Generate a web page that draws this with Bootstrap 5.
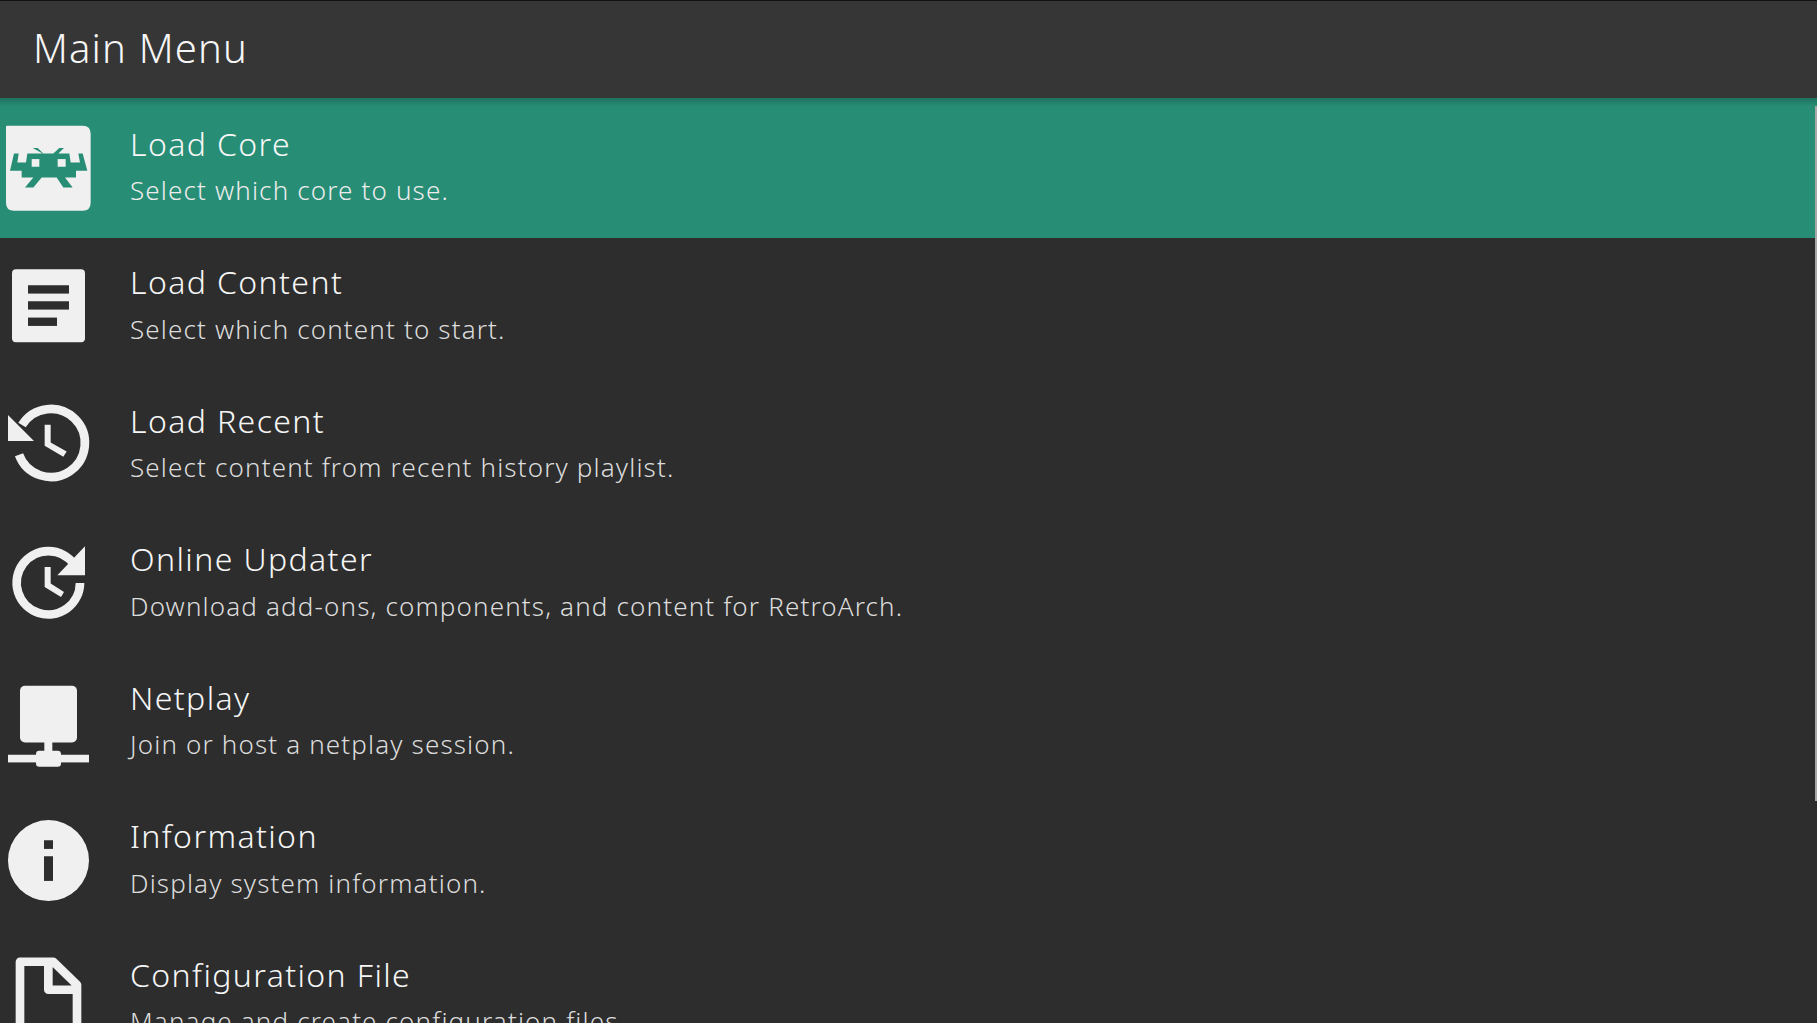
<!DOCTYPE html>
<html lang="en">
<head>
<meta charset="utf-8">
<title>Main Menu</title>
<link href="https://cdn.jsdelivr.net/npm/bootstrap@5.3.0/dist/css/bootstrap.min.css" rel="stylesheet">
<style>
html,body{height:100%;margin:0;overflow:hidden;background:#2d2d2d;font-family:"Noto Sans","Liberation Sans",sans-serif}
.ra-app{height:1023px;position:relative;overflow:hidden}
.ra-head{height:98px;background:#363636;border-top:1px solid #111;padding-left:33px;padding-bottom:4px;color:#f6f6f6;font-size:40px;letter-spacing:1.15px;font-weight:300}
.ra-list{--bs-list-group-bg:transparent;--bs-list-group-border-width:0;--bs-list-group-border-radius:0;--bs-list-group-item-padding-x:0;--bs-list-group-item-padding-y:0}
.ra-row{height:138.5px;color:#f6f6f6}
.ra-row:first-child{height:139.75px;padding-top:1.25px!important}
.ra-row.ra-sel{background:#278d75}
.ra-icon{width:97px;height:96px;flex:none;overflow:visible}
.ra-text{margin-left:33px;margin-top:-5.5px}
.ra-title{font-size:32px;line-height:40px;letter-spacing:1.4px;font-weight:300;white-space:nowrap}
.ra-sub{font-size:26px;line-height:36px;letter-spacing:1.15px;margin-top:8.5px;color:#dcdcdc;font-weight:300;white-space:nowrap}
.ra-sel .ra-sub{color:#ececec}
.ra-shadow{position:absolute;left:0;right:0;top:98px;height:8px;background:linear-gradient(rgba(0,0,0,.2),rgba(0,0,0,0))}
.ra-bar{position:absolute;right:0;top:106px;width:2px;height:695px;background:#a8a8a8}
.ic{fill:#f0f0f0}.ics{fill:none;stroke:#f0f0f0;stroke-width:26}
</style>
</head>
<body>
<div class="ra-app">
  <header class="ra-head d-flex align-items-center">Main Menu</header>
  <div class="list-group ra-list">
    <div class="list-group-item ra-row ra-sel d-flex align-items-center">
      <svg class="ra-icon" viewBox="0 120.25 97 96" aria-hidden="true"><g transform="translate(0 110) scale(.33333)">
        <path class="ic" d="M18 48Q18 45 21 45H248Q272 45 272 69V276Q272 300 248 300H42Q18 300 18 276Z"/>
        <path fill="#278d75" d="M42 128H56L52 155H78L82 128H128L98 112H113L130 128H160L178 112H192L175 128H208L212 155H240L235 128H248L262 180H228V200H195L218 230H190L170 200H125L100 230H75L100 200H65V180H30Z"/>
        <rect class="ic" x="95" y="145" width="23" height="23"/><rect class="ic" x="173" y="145" width="24" height="23"/>
      </g></svg>
      <div class="ra-text"><div class="ra-title">Load Core</div><div class="ra-sub">Select which core to use.</div></div>
    </div>
    <div class="list-group-item ra-row d-flex align-items-center">
      <svg class="ra-icon" viewBox="0 258.75 97 96" aria-hidden="true"><g transform="scale(.33333)">
        <rect class="ic" x="36" y="807" width="219" height="219" rx="12"/>
        <rect fill="#2d2d2d" x="84" y="855" width="123" height="25"/><rect fill="#2d2d2d" x="84" y="903" width="123" height="25"/><rect fill="#2d2d2d" x="84" y="952" width="87" height="25"/>
      </g></svg>
      <div class="ra-text"><div class="ra-title">Load Content</div><div class="ra-sub">Select which content to start.</div></div>
    </div>
    <div class="list-group-item ra-row d-flex align-items-center">
      <svg class="ra-icon" viewBox="0 397.25 97 96" aria-hidden="true"><g transform="translate(0 380) scale(.33333)">
        <path class="ics" d="M66 133A102 102 0 1 1 57 222"/>
        <path class="ic" d="M24 103L102 181H24ZM134 132H152V185L200 212L190 228L134 195Z"/>
      </g></svg>
      <div class="ra-text"><div class="ra-title">Load Recent</div><div class="ra-sub">Select content from recent history playlist.</div></div>
    </div>
    <div class="list-group-item ra-row d-flex align-items-center">
      <svg class="ra-icon" viewBox="0 535.75 97 96" aria-hidden="true"><g transform="translate(0 380) scale(.33333)">
        <path class="ics" d="M222 552A95 95 0 1 0 240 608"/>
        <path class="ic" d="M255 498V585H172ZM134 560H152V610L192 635L183 650L134 620Z"/>
      </g></svg>
      <div class="ra-text"><div class="ra-title">Online Updater</div><div class="ra-sub">Download add-ons, components, and content for RetroArch.</div></div>
    </div>
    <div class="list-group-item ra-row d-flex align-items-center">
      <svg class="ra-icon" viewBox="0 674.25 97 96" aria-hidden="true"><g transform="translate(0 660) scale(.33333)">
        <rect class="ic" x="60" y="75" width="171" height="170" rx="15"/>
        <rect class="ic" x="133" y="240" width="24" height="45"/>
        <rect class="ic" x="24" y="282" width="243" height="23"/>
        <rect class="ic" x="108" y="270" width="75" height="48" rx="10"/>
      </g></svg>
      <div class="ra-text"><div class="ra-title">Netplay</div><div class="ra-sub">Join or host a netplay session.</div></div>
    </div>
    <div class="list-group-item ra-row d-flex align-items-center">
      <svg class="ra-icon" viewBox="0 812.75 97 96" aria-hidden="true"><g transform="translate(0 660) scale(.33333)">
        <circle class="ic" cx="145.5" cy="601" r="121.5"/>
        <rect fill="#2d2d2d" x="132" y="540" width="27" height="26"/><rect fill="#2d2d2d" x="132" y="588" width="27" height="74"/>
      </g></svg>
      <div class="ra-text"><div class="ra-title">Information</div><div class="ra-sub">Display system information.</div></div>
    </div>
    <div class="list-group-item ra-row d-flex align-items-center">
      <svg class="ra-icon" viewBox="0 951.25 97 96" aria-hidden="true"><g transform="translate(0 660) scale(.33333)">
        <path class="ics" stroke-linejoin="round" d="M60 1200V903H160L231 972V1200M145 903V987H231"/>
      </g></svg>
      <div class="ra-text"><div class="ra-title">Configuration File</div><div class="ra-sub">Manage and create configuration files.</div></div>
    </div>
  </div>
  <div class="ra-shadow"></div>
  <div class="ra-bar"></div>
</div>
</body>
</html>
